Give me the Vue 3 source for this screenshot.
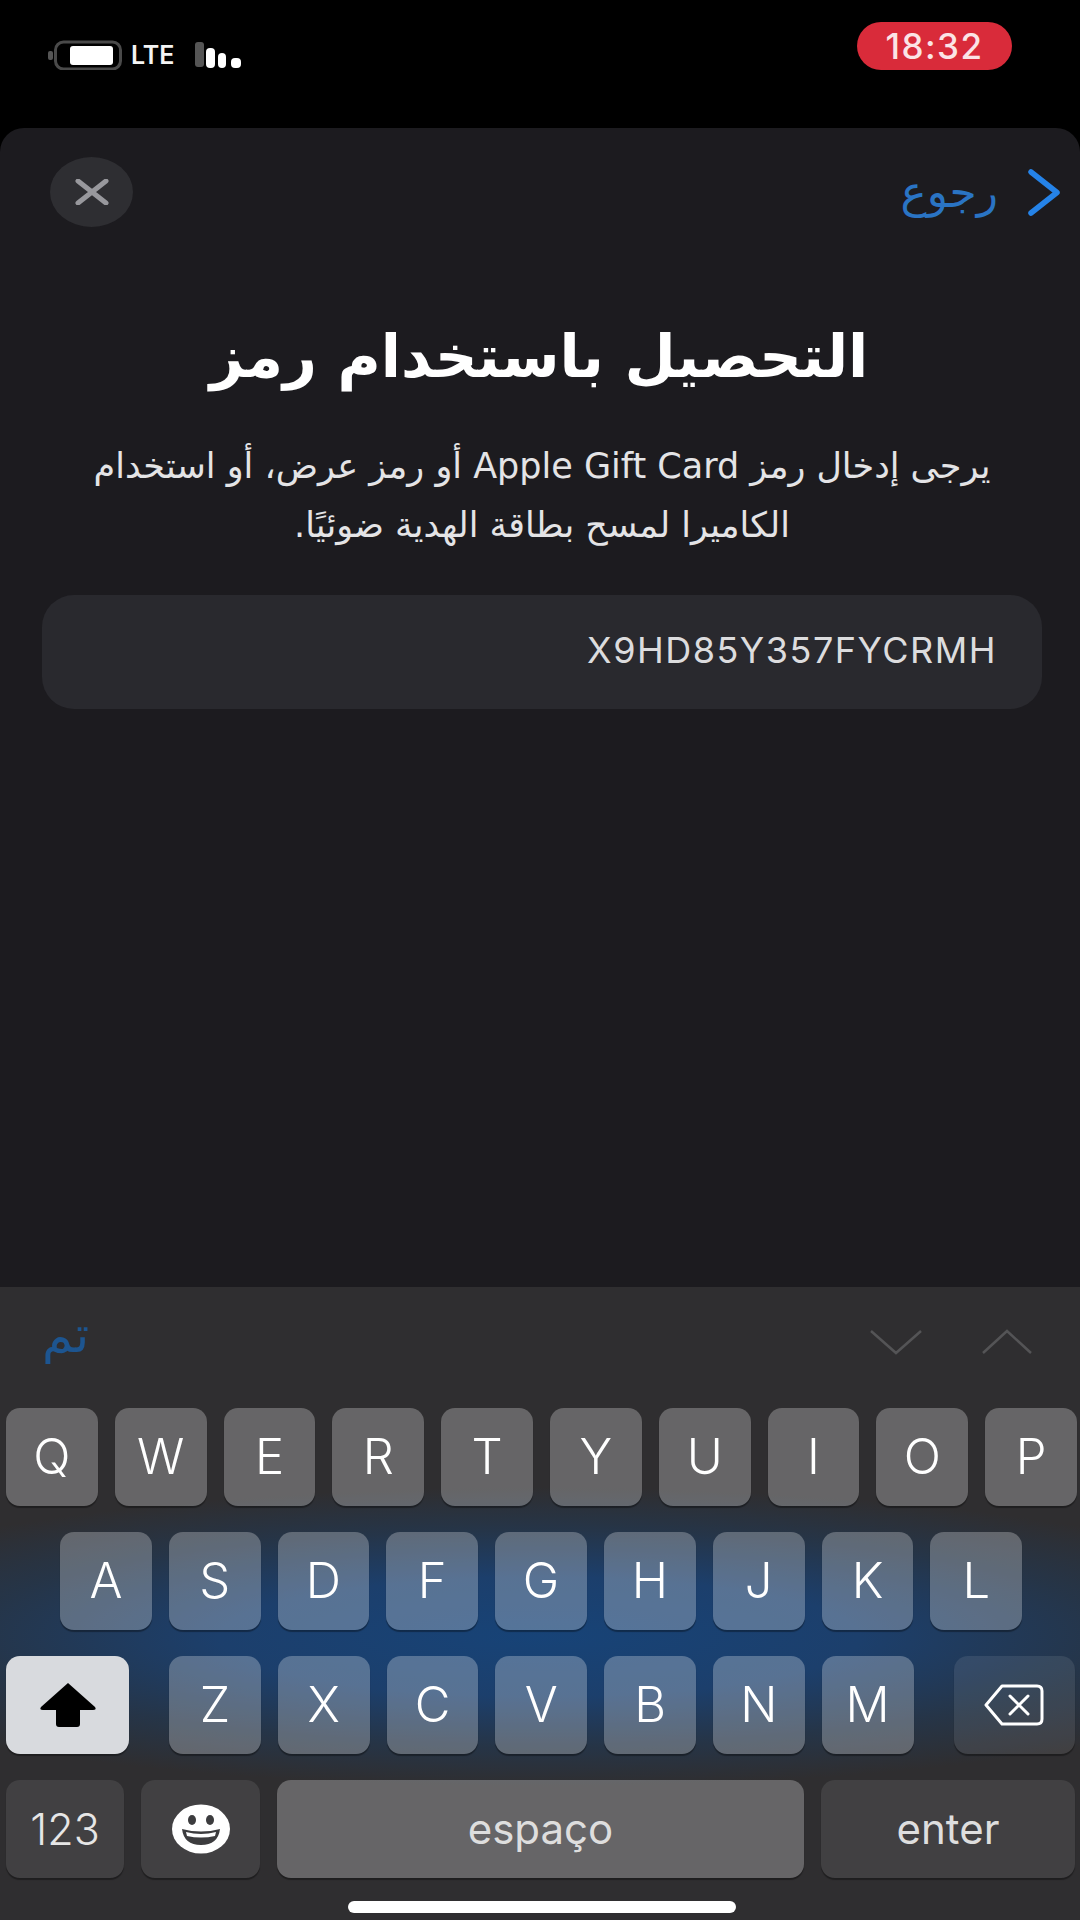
<script setup>
const row1 = ['Q','W','E','R','T','Y','U','I','O','P']
const row2 = ['A','S','D','F','G','H','J','K','L']
const row3 = ['Z','X','C','V','B','N','M']
</script>

<template>
  <div class="screen">
    <header class="status">
      <div class="status-left">
        <svg class="battery" width="75" height="30" viewBox="0 0 75 30">
          <rect x="0" y="11" width="5" height="9" rx="2" fill="#555" />
          <rect x="7.5" y="2" width="65" height="27" rx="8" fill="none" stroke="#4a4a4a" stroke-width="3" />
          <rect x="22" y="6" width="43" height="19" rx="3" fill="#fff" />
        </svg>
        <span class="lte">LTE</span>
        <svg class="bars" width="50" height="28" viewBox="0 0 50 28">
          <rect x="0" y="0" width="9" height="25" rx="3" fill="#555" />
          <rect x="11" y="6" width="9" height="20" rx="4" fill="#fff" />
          <rect x="23" y="11" width="8" height="15" rx="4" fill="#fff" />
          <rect x="36" y="16" width="10" height="10" rx="4" fill="#fff" />
        </svg>
      </div>
      <div class="clock">18:32</div>
    </header>

    <main class="sheet">
      <div class="nav">
        <button class="close" type="button">
          <svg width="34" height="26" viewBox="0 0 34 26">
            <path d="M3 2 L31 24 M31 2 L3 24" stroke="#98989d" stroke-width="5" stroke-linecap="round" fill="none" />
          </svg>
        </button>
        <div class="back">
          <span class="back-label" dir="rtl">رجوع</span>
          <svg width="33" height="47" viewBox="0 0 33 47">
            <path d="M3 3 L29 23.5 L3 44" stroke="#2583e8" stroke-width="5.5" stroke-linecap="round" stroke-linejoin="round" fill="none" />
          </svg>
        </div>
      </div>

      <h1 class="title" dir="rtl">التحصيل باستخدام رمز</h1>
      <p class="desc" dir="rtl">
        <span class="line">يرجى إدخال رمز Apple Gift Card أو رمز عرض، أو استخدام</span>
        <span class="line">الكاميرا لمسح بطاقة الهدية ضوئيًا.</span>
      </p>

      <div class="field">X9HD85Y357FYCRMH</div>
    </main>

    <section class="keyboard">
      <div class="accessory">
        <span class="done" dir="rtl">تم</span>
        <div class="arrows">
          <svg width="54" height="26" viewBox="0 0 54 26">
            <path d="M2 2 L27 24 L52 2" stroke="#545456" stroke-width="2.5" fill="none" />
          </svg>
          <svg width="52" height="26" viewBox="0 0 52 26">
            <path d="M2 24 L26 2 L50 24" stroke="#545456" stroke-width="2.5" fill="none" />
          </svg>
        </div>
      </div>

      <div class="rows">
        <div class="row">
          <div v-for="k in row1" :key="k" class="key">{{ k }}</div>
        </div>
        <div class="row row-home">
          <div v-for="k in row2" :key="k" class="key">{{ k }}</div>
        </div>
        <div class="row">
          <div class="key shift">
            <svg width="60" height="46" viewBox="0 0 60 46">
              <path d="M30 1 L57 25 Q59 28 55 28 L42 28 L42 42 Q42 45 39 45 L21 45 Q18 45 18 42 L18 28 L5 28 Q1 28 3 25 Z" fill="#000" />
            </svg>
          </div>
          <div class="letters">
            <div v-for="k in row3" :key="k" class="key">{{ k }}</div>
          </div>
          <div class="key fn del">
            <svg width="62" height="44" viewBox="0 0 62 44">
              <path d="M19 3 L54 3 Q59 3 59 8 L59 36 Q59 41 54 41 L19 41 L3 22 Z" fill="none" stroke="#fff" stroke-width="3" stroke-linejoin="round" />
              <path d="M27 13 L45 31 M45 13 L27 31" stroke="#fff" stroke-width="3" stroke-linecap="round" />
            </svg>
          </div>
        </div>
        <div class="row row-bottom">
          <div class="key fn num">123</div>
          <div class="key fn emoji">
            <svg width="60" height="50" viewBox="0 0 60 50">
              <ellipse cx="30" cy="25" rx="29" ry="24.5" fill="#fff" />
              <ellipse cx="21" cy="16" rx="4" ry="5" fill="#3c3c3e" />
              <ellipse cx="39" cy="16" rx="4" ry="5" fill="#3c3c3e" />
              <path d="M11 25 Q30 30 49 25 Q47 41 30 41 Q13 41 11 25 Z" fill="#3c3c3e" />
              <path d="M15 28 Q30 32 45 28 L44 32 Q30 35 16 32 Z" fill="#fff" />
            </svg>
          </div>
          <div class="key space">espaço</div>
          <div class="key fn enter">enter</div>
        </div>
      </div>

      <div class="home"></div>
    </section>
  </div>
</template>

<style>
html, body { margin: 0; background: #000; }
</style>

<style scoped>
.screen {
  width: 1080px;
  height: 1920px;
  background: #000;
  display: flex;
  flex-direction: column;
  overflow: hidden;
  font-family: "Inter", "DejaVu Sans", sans-serif;
}
.status {
  height: 128px;
  flex: none;
  box-sizing: border-box;
  padding: 22px 68px 0 48px;
  display: flex;
  justify-content: space-between;
  align-items: flex-start;
}
.status-left {
  display: flex;
  align-items: center;
  height: 30px;
  margin-top: 18px;
}
.lte {
  margin-left: 8px;
  color: #f4f4f4;
  font: 600 25px/30px "Inter", sans-serif;
  width: 54px;
}
.bars { margin-left: 10px; margin-top: 2px; }
.clock {
  width: 155px;
  height: 48px;
  border-radius: 24px;
  background: #d92b3a;
  color: #fbe4e6;
  font: 500 35px/48px "Inter", sans-serif;
  letter-spacing: 1.5px;
  text-align: center;
}
.sheet {
  height: 1159px;
  flex: none;
  box-sizing: border-box;
  background: #1c1b1f;
  border-radius: 24px 24px 0 0;
  padding: 29px 38px 0 42px;
  color: #fff;
}
.nav {
  display: flex;
  justify-content: space-between;
  align-items: center;
  height: 70px;
  margin-right: -19px;
  padding-left: 8px;
}
.close {
  width: 83px;
  height: 70px;
  padding: 0;
  border: 0;
  border-radius: 50%;
  background: #2e2e32;
  display: flex;
  align-items: center;
  justify-content: center;
}
.back {
  display: flex;
  align-items: center;
  gap: 30px;
}
.back-label {
  color: #2a74c4;
  font: 400 44px/50px "DejaVu Sans", sans-serif;
}
.title {
  margin: 90px 0 0;
  padding-right: 6px;
  text-align: center;
  font: 700 59px/80px "DejaVu Sans", sans-serif;
  color: #fff;
}
.desc {
  margin: 40px 0 0;
  text-align: center;
  font: 400 35px/59px "DejaVu Sans", sans-serif;
  color: #e4e4e6;
}
.line { display: block; white-space: nowrap; }
.field {
  margin-top: 40px;
  height: 114px;
  box-sizing: border-box;
  padding-right: 45px;
  border-radius: 32px;
  background: #29292e;
  color: #dcdcde;
  text-align: right;
  font: 400 36px/110px "Inter", sans-serif;
  letter-spacing: 1.5px;
}
.keyboard {
  flex: 1;
  background:
    radial-gradient(ellipse 800px 150px at 540px 350px, #174377 0%, #1c3f6c 40%, rgba(36, 54, 76, 0.85) 72%, rgba(47, 46, 48, 0) 100%),
    #2f2e30;
  display: flex;
  flex-direction: column;
}
.accessory {
  height: 121px;
  flex: none;
  box-sizing: border-box;
  padding: 16px 47px 0 42px;
  display: flex;
  justify-content: space-between;
  align-items: flex-start;
}
.done {
  color: #1d5590;
  font: 400 50px/64px "DejaVu Sans", sans-serif;
}
.arrows {
  display: flex;
  gap: 58px;
  margin-top: 26px;
}
.rows {
  display: flex;
  flex-direction: column;
  gap: 26px;
}
.row {
  display: flex;
  gap: 17px;
  padding-left: 6px;
}
.row-home { padding-left: 60px; }
.letters {
  display: flex;
  gap: 17px;
  margin: 0 23px;
}
.key {
  width: 91.8px;
  height: 98px;
  flex: none;
  border-radius: 14px;
  background: rgba(255, 255, 255, 0.265);
  box-shadow: 0 2px 1px rgba(0, 0, 0, 0.35);
  color: #fff;
  font: 300 49px/98px "Inter", sans-serif;
  text-align: center;
  display: flex;
  align-items: center;
  justify-content: center;
}
.shift { width: 123px; background: #d8dade; }
.fn { background: rgba(255, 255, 255, 0.09); }
.del { width: 121px; }
.num { width: 118px; font-size: 43px; color: #e6e6e6; }
.emoji { width: 119px; }
.space { width: 527px; font-size: 42px; font-weight: 400; color: #dedede; }
.enter { width: 254px; font-size: 42px; font-weight: 400; color: #dedede; }
.home {
  width: 388px;
  height: 12px;
  flex: none;
  margin: 23px 0 0 348px;
  border-radius: 6px;
  background: #fff;
}
</style>
